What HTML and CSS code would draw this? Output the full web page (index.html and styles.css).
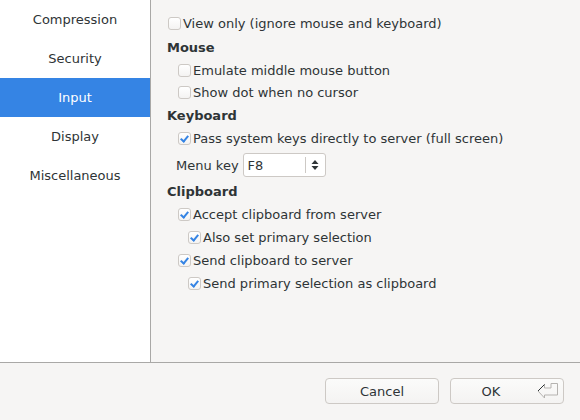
FILE: index.html
```html
<!DOCTYPE html>
<html>
<head>
<meta charset="utf-8">
<link rel="stylesheet" href="styles.css">
</head>
<body>
<div class="dialog">
  <div class="main">
    <div class="sidebar">
      <div class="nav-item">Compression</div>
      <div class="nav-item">Security</div>
      <div class="nav-item active">Input</div>
      <div class="nav-item">Display</div>
      <div class="nav-item">Miscellaneous</div>
    </div>
    <div class="content">
      <div class="row r-first"><span class="cb"></span><span>View only (ignore mouse and keyboard)</span></div>
      <div class="heading h-mouse">Mouse</div>
      <div class="row r-tight l1"><span class="cb"></span><span>Emulate middle mouse button</span></div>
      <div class="row r-tight l1"><span class="cb"></span><span>Show dot when no cursor</span></div>
      <div class="heading h-keyboard">Keyboard</div>
      <div class="row l1"><span class="cb checked"></span><span>Pass system keys directly to server (full screen)</span></div>
      <div class="spin-row">
        <span class="spin-label">Menu key</span>
        <div class="spin">
          <span class="spin-value">F8</span>
          <span class="spin-sep"></span>
          <svg class="spin-arrows" width="8" height="12" viewBox="0 0 8 12"><path d="M4 1 L7.5 5 L0.5 5 Z M4 11 L7.5 7 L0.5 7 Z" fill="#2e3436"/></svg>
        </div>
      </div>
      <div class="heading h-clip">Clipboard</div>
      <div class="row l1"><span class="cb checked"></span><span>Accept clipboard from server</span></div>
      <div class="row l2"><span class="cb checked"></span><span>Also set primary selection</span></div>
      <div class="row l1"><span class="cb checked"></span><span>Send clipboard to server</span></div>
      <div class="row l2"><span class="cb checked"></span><span>Send primary selection as clipboard</span></div>
    </div>
  </div>
  <div class="footer">
    <button class="btn">Cancel</button>
    <button class="btn btn-ok"><span class="ok-text">OK</span>
      <svg class="enter-icon" width="24" height="18" viewBox="0 0 24 18">
        <path d="M2 9 L8.5 2.5 L8.5 6 L15 6 L15 1.5 L21.5 1.5 L21.5 13 L8.5 13 L8.5 16 Z" fill="none" stroke="#b5b3b0" stroke-width="1"/>
        <path d="M2 9 L8.5 2.5" fill="none" stroke="#2e3436" stroke-width="1"/>
      </svg>
    </button>
  </div>
</div>
</body>
</html>
```

FILE: styles.css
```css
* { box-sizing: border-box; }
html, body {
  margin: 0;
  padding: 0;
}
body {
  width: 580px;
  height: 420px;
  overflow: hidden;
  background: #f6f5f4;
  font-family: "DejaVu Sans", sans-serif;
  font-size: 13px;
  color: #2e3436;
}
.dialog {
  display: flex;
  flex-direction: column;
  height: 420px;
}
.main {
  display: flex;
  height: 363px;
  border-bottom: 1px solid #a9a8a6;
}
.sidebar {
  width: 151px;
  background: #ffffff;
  border-right: 1px solid #a9a8a6;
  display: flex;
  flex-direction: column;
}
.nav-item {
  height: 39px;
  line-height: 39px;
  text-align: center;
  color: #2e3436;
}
.nav-item.active {
  background: #3584e4;
  color: #ffffff;
}
.content {
  flex: 1;
  padding: 12px 0 0 17px;
  display: flex;
  flex-direction: column;
}
.row {
  display: flex;
  align-items: center;
  gap: 2px;
  height: 23px;
  white-space: nowrap;
}
.r-tight { height: 22px; }
.l1 { margin-left: 10px; }
.l2 { margin-left: 20px; }
.heading {
  font-weight: bold;
  margin-left: -1px;
  display: flex;
  align-items: center;
}
.h-mouse { height: 24px; }
.h-keyboard { height: 24px; }
.h-clip { height: 23px; }
.cb {
  width: 13px;
  height: 13px;
  flex: none;
  border: 1px solid #cdc9c5;
  border-radius: 3px;
  background: linear-gradient(#ffffff, #f4f3f2);
  position: relative;
}
.cb.checked::after {
  content: "";
  position: absolute;
  left: 3px;
  top: 1px;
  width: 3px;
  height: 6px;
  border-right: 2px solid #3584e4;
  border-bottom: 2px solid #3584e4;
  transform: rotate(40deg);
}
.spin-row {
  display: flex;
  align-items: center;
  height: 30px;
  margin-left: 8px;
  gap: 4px;
}
.spin {
  width: 83px;
  height: 24px;
  background: #ffffff;
  border: 1px solid #cdc9c5;
  border-radius: 3px;
  display: flex;
  align-items: center;
}
.spin-value {
  flex: 1;
  padding-left: 4px;
}
.spin-sep {
  width: 1px;
  height: 16px;
  background: #cdc9c5;
}
.spin-arrows {
  margin: 0 6px 0 5px;
}
.footer {
  display: flex;
  justify-content: flex-end;
  padding: 15px 16px 0 0;
  gap: 11px;
}
.btn {
  width: 114px;
  height: 26px;
  border: 1px solid #cdc9c5;
  border-radius: 4px;
  background: linear-gradient(#fbfbfa, #f4f3f2);
  font-family: "DejaVu Sans", sans-serif;
  font-size: 13px;
  color: #2e3436;
  padding: 0;
}
.btn-ok {
  display: flex;
  align-items: center;
  padding-left: 30px;
}
.ok-text {
  width: 20px;
  text-align: center;
}
.enter-icon {
  margin-left: 35px;
}
```
